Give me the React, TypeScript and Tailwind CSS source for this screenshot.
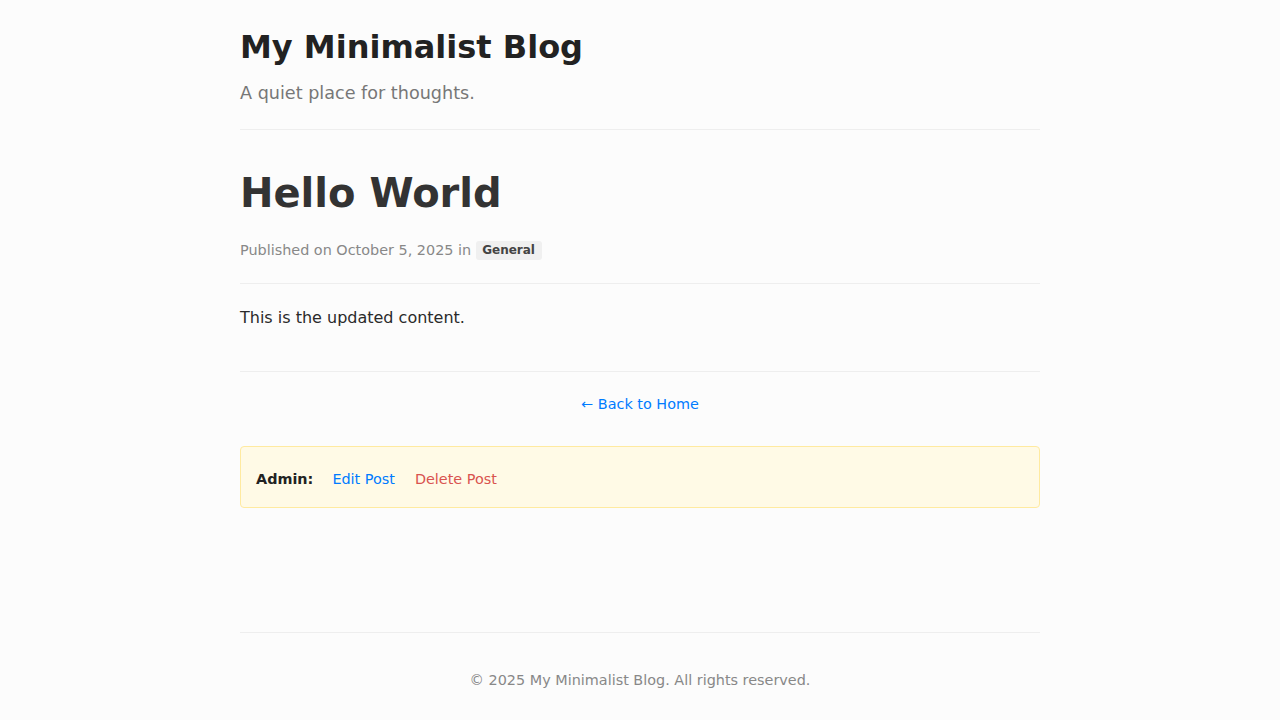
export default function App() {
  return (
    <div
      className="min-h-screen bg-[#fcfcfc] text-[#333]"
      style={{ fontFamily: '"DejaVu Sans", Verdana, sans-serif' }}
    >
      <div className="mx-auto flex min-h-screen w-[800px] flex-col">
        <header className="border-b border-[#eeeeee] pt-[28px] pb-[24px]">
          <h1 className="text-[32px] leading-[38px] font-bold text-[#222]">My Minimalist Blog</h1>
          <p className="mt-[15px] text-[17.6px] leading-[24px] text-[#777]">A quiet place for thoughts.</p>
        </header>

        <main className="flex-1">
          <article>
            <div className="border-b border-[#eeeeee] pt-[39px] pb-[23px]">
              <h2 className="text-[40px] leading-[48px] font-bold text-[#333]">Hello World</h2>
              <div className="mt-[23px] flex items-center text-[14.4px] leading-[20px] text-[#888]">
                <span>Published on October 5, 2025 in</span>
                <span className="ml-[5px] rounded-[3px] bg-[#f0f0f0] pl-[6px] pr-[7px] text-[12px] leading-[19px] font-bold text-[#444]">
                  General
                </span>
              </div>
            </div>
            <div className="border-b border-[#eeeeee] pt-[21px] pb-[40px]">
              <p className="text-[16px] leading-[26px] text-[#2a2a2a]">This is the updated content.</p>
            </div>
          </article>

          <nav className="pt-[22px] text-center text-[14.4px] leading-[20px]">
            <a href="#" className="text-[#007bff]">← Back to Home</a>
          </nav>

          <div className="mt-[32px] flex items-center rounded-[4px] border border-[#ffeaa0] bg-[#fffae6] pt-[20px] pb-[16px] pl-[15px] text-[14.4px] leading-[24px]">
            <strong className="font-bold text-[#222]">Admin:</strong>
            <a href="#" className="ml-[19px] text-[#007bff]">Edit Post</a>
            <a href="#" className="ml-[20px] text-[#d9534f]">Delete Post</a>
          </div>
        </main>

        <footer className="border-t border-[#eeeeee] pt-[37px] pb-[30px] text-center text-[14.4px] leading-[20px] text-[#888]">
          © 2025 My Minimalist Blog. All rights reserved.
        </footer>
      </div>
    </div>
  );
}
